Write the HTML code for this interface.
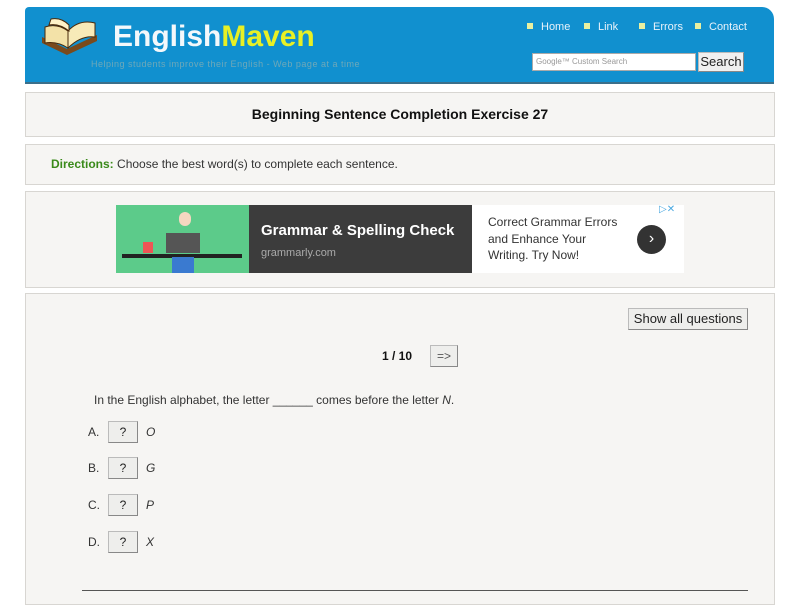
<!DOCTYPE html>
<html><head><style>
body{margin:0;background:#fff;font-family:"Liberation Sans",sans-serif;width:800px;height:600px;overflow:hidden;position:relative}
.box{position:absolute;left:25px;width:748px;background:#f6f5f3;border:1px solid #d8d6d2}
.hdr{position:absolute;left:25px;top:7px;width:749px;height:75px;background:#1190cf;border-radius:4px 12px 0 0;border-bottom:2px solid #3b6f8a}
.logo{position:absolute;left:88px;top:13px;font-size:30px;font-weight:bold;color:#f4f8fb;letter-spacing:0}
.logo span{color:#e8f025}
.tag{position:absolute;left:66px;top:52px;font-size:9px;color:#6fa8b8;letter-spacing:.5px}
.nav{position:absolute;top:14px;font-size:11px;color:#e8f2fa}
.nav i{display:inline-block;width:6px;height:6px;background:#e8f0a0;margin-right:8px;vertical-align:1px}
.btn{position:absolute;background:#eeeeec;border:1px solid #bbb;border-right-color:#888;border-bottom-color:#888;font-size:13px;text-align:center;color:#222}
.q{position:absolute;font-size:12px;color:#333}
</style></head><body>
<div class="hdr">
<svg style="position:absolute;left:14px;top:8px" width="62" height="42" viewBox="0 0 62 42"><path d="M3 22 L28 34 L58 20 L58 26 L28 40 L3 28Z" fill="#7a4a1c"/><path d="M6 12 Q18 8 29 16 L29 33 Q18 26 6 28Z" fill="#f3e2a8" stroke="#4a2a0a"/><path d="M29 16 Q40 4 56 8 L56 22 Q42 20 29 33Z" fill="#f7eab8" stroke="#4a2a0a"/><path d="M12 4 Q22 2 30 10 L30 16 Q20 8 10 10Z" fill="#fff3c8" stroke="#4a2a0a"/></svg>
<div class="logo">English<span>Maven</span></div>
<div class="tag">Helping students improve their English - Web page at a time</div>
<div class="nav" style="left:502px"><i></i>Home</div>
<div class="nav" style="left:559px"><i></i>Link</div>
<div class="nav" style="left:614px"><i></i>Errors</div>
<div class="nav" style="left:670px"><i></i>Contact</div>
<div style="position:absolute;left:507px;top:46px;width:159px;height:16px;background:#fff;border:1px solid #aaa;font-size:8px;color:#999;line-height:16px;padding-left:3px">Google™ Custom Search</div>
<div class="btn" style="left:673px;top:45px;width:44px;height:18px;line-height:18px;background:#f0f0f0">Search</div>
</div>
<div class="box" style="top:92px;height:43px;text-align:center;line-height:43px;font-weight:bold;font-size:14px;color:#111">Beginning Sentence Completion Exercise 27</div>
<div class="box" style="top:144px;height:39px;line-height:39px;font-size:12px;color:#333"><span style="margin-left:25px;color:#3a8a1a;font-weight:bold">Directions:</span> Choose the best word(s) to complete each sentence.</div>
<div class="box" style="top:191px;height:95px"></div>
<div style="position:absolute;left:116px;top:205px;width:568px;height:68px;background:#fff">
<div style="position:absolute;left:0;top:0;width:133px;height:68px;background:#5ccb8a">
<div style="position:absolute;left:6px;top:49px;width:120px;height:4px;background:#222"></div>
<div style="position:absolute;left:50px;top:28px;width:34px;height:20px;background:#555"></div>
<div style="position:absolute;left:56px;top:52px;width:22px;height:16px;background:#3a7ad0"></div>
<div style="position:absolute;left:63px;top:7px;width:12px;height:14px;background:#f5d7c0;border-radius:6px"></div>
<div style="position:absolute;left:27px;top:37px;width:10px;height:11px;background:#e55"></div>
</div>
<div style="position:absolute;left:133px;top:0;width:223px;height:68px;background:#3c3c3c">
<div style="position:absolute;left:12px;top:17px;color:#fff;font-weight:bold;font-size:15px">Grammar &amp; Spelling Check</div>
<div style="position:absolute;left:12px;top:42px;color:#aaa;font-size:11px">grammarly.com</div></div>
<div style="position:absolute;left:372px;top:9px;font-size:12px;color:#333;line-height:16.5px">Correct Grammar Errors<br>and Enhance Your<br>Writing. Try Now!</div>
<div style="position:absolute;left:521px;top:20px;width:29px;height:29px;border-radius:50%;background:#333;color:#fff;text-align:center;line-height:28px;font-size:16px">›</div>
<div style="position:absolute;left:543px;top:-1px;font-size:10px;color:#4aa8e0">▷✕</div>
</div>
<div class="box" style="top:293px;height:310px"></div>
<div class="btn" style="left:628px;top:308px;width:118px;height:20px;line-height:20px">Show all questions</div>
<div class="q" style="left:382px;top:349px;font-weight:bold;color:#111">1 / 10</div>
<div class="btn" style="left:430px;top:345px;width:26px;height:20px;line-height:20px;font-size:12px;color:#555">=&gt;</div>
<div class="q" style="left:94px;top:393px">In the English alphabet, the letter ______ comes before the letter <i>N</i>.</div>
<div class="q" style="left:88px;top:425px">A.</div><div class="btn" style="left:108px;top:421px;width:28px;height:20px;line-height:20px;font-size:12px">?</div><div class="q" style="left:146px;top:425px;font-style:italic">O</div>
<div class="q" style="left:88px;top:461px">B.</div><div class="btn" style="left:108px;top:457px;width:28px;height:20px;line-height:20px;font-size:12px">?</div><div class="q" style="left:146px;top:461px;font-style:italic">G</div>
<div class="q" style="left:88px;top:498px">C.</div><div class="btn" style="left:108px;top:494px;width:28px;height:20px;line-height:20px;font-size:12px">?</div><div class="q" style="left:146px;top:498px;font-style:italic">P</div>
<div class="q" style="left:88px;top:535px">D.</div><div class="btn" style="left:108px;top:531px;width:28px;height:20px;line-height:20px;font-size:12px">?</div><div class="q" style="left:146px;top:535px;font-style:italic">X</div>
<div style="position:absolute;left:82px;top:590px;width:666px;height:1px;background:#555"></div>
</body></html>
